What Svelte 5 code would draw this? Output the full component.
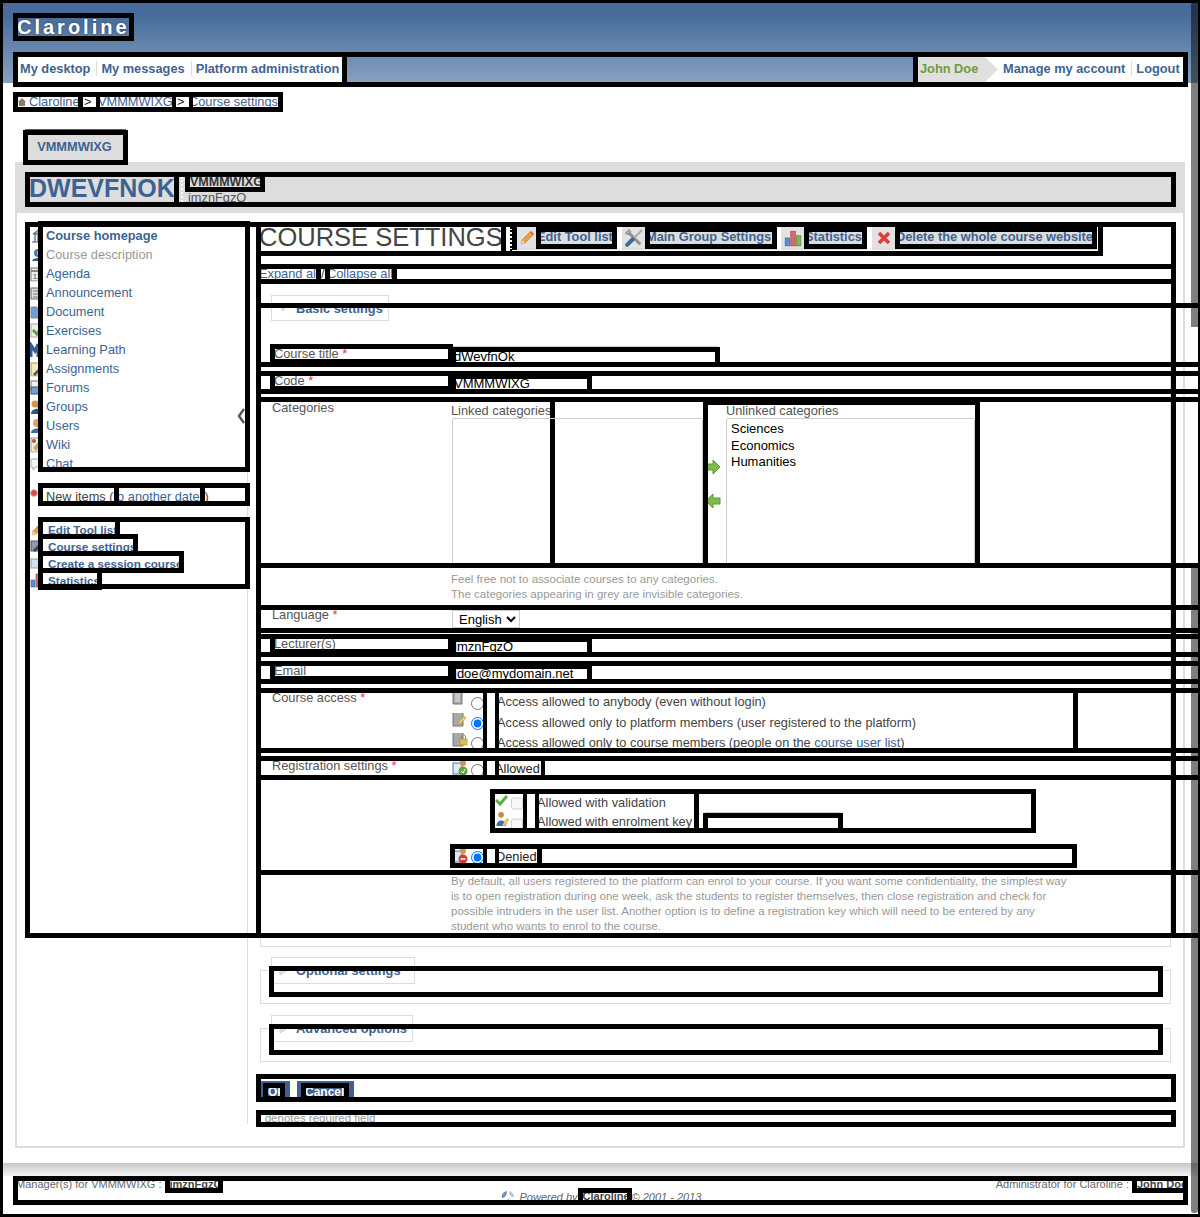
<script>
  const navLeft = ["My desktop", "My messages", "Platform administration"];

  // left menu of the course
  const tools = [
    { name: "Course homepage", icon: "home", bold: true },
    { name: "Course description", icon: "info", off: true },
    { name: "Agenda", icon: "agenda" },
    { name: "Announcement", icon: "announce" },
    { name: "Document", icon: "folder" },
    { name: "Exercises", icon: "check" },
    { name: "Learning Path", icon: "path" },
    { name: "Assignments", icon: "assign" },
    { name: "Forums", icon: "forum" },
    { name: "Groups", icon: "group" },
    { name: "Users", icon: "user" },
    { name: "Wiki", icon: "wiki" },
    { name: "Chat", icon: "chat" },
  ];
  const admin = [
    { name: "Edit Tool list", icon: "pencil", w: 72 },
    { name: "Course settings", icon: "settings", w: 90 },
    { name: "Create a session course", icon: "session", w: 136 },
    { name: "Statistics", icon: "stats", w: 54 },
  ];
  const toolbar = [
    { name: "Edit Tool list", icon: "pencil", cls: "t1" },
    { name: "Main Group Settings", icon: "tools", cls: "t2" },
    { name: "Statistics", icon: "stats", cls: "t3" },
    { name: "Delete the whole course website", icon: "cross", cls: "t4" },
  ];
  const access = [
    { icon: "page", checked: false, label: "Access allowed to anybody (even without login)" },
    { icon: "pagekey", checked: true, label: "Access allowed only to platform members (user registered to the platform)" },
    { icon: "pagelock", checked: false, label: "Access allowed only to course members (people on the ", link: "course user list", after: ")" },
  ];
</script>

{#snippet icon(name)}
  <svg class="ico" viewBox="0 0 16 16" aria-hidden="true">
    {#if name === "home"}
      <path d="M2 14h12M3 6h10L8 2z" fill="#9aa7b5" stroke="#556" />
      <path d="M5 6v8M8 6v8M11 6v8" stroke="#5d7fa8" stroke-width="1.5" />
    {:else if name === "info"}
      <circle cx="8" cy="6" r="4" fill="#4a78ad" />
      <path d="M2 14c1-4 11-4 12 0z" fill="#2f5f98" />
      <path d="M8 4v4" stroke="#fff" />
    {:else if name === "agenda"}
      <rect x="1" y="2" width="14" height="13" fill="#eee" stroke="#777" />
      <path d="M1 5h14" stroke="#888" stroke-width="2" />
      <text x="3" y="13" font-size="7" font-family="Liberation Sans" fill="#444">12</text>
    {:else if name === "announce"}
      <rect x="1" y="3" width="13" height="11" fill="#ddd" stroke="#666" />
      <path d="M3 6h7M3 9h7M3 12h7" stroke="#777" />
      <path d="M13 2l2 2" stroke="#c33" stroke-width="2" />
    {:else if name === "folder"}
      <path d="M1 3h6l1 2h7v9H1z" fill="#6f9ed6" stroke="#8a8a8a" />
    {:else if name === "check"}
      <rect x="1" y="1" width="13" height="13" fill="#eee" stroke="#aaa" />
      <path d="M3 7l4 4 7-9" fill="none" stroke="#58a83a" stroke-width="3" />
    {:else if name === "path"}
      <path d="M1 15V3l4 6 3-7v13" fill="none" stroke="#2f5f98" stroke-width="3" />
    {:else if name === "assign"}
      <rect x="1" y="2" width="13" height="13" fill="#f4e9c5" stroke="#b59b54" />
      <path d="M3 13l8-8 2 2-8 8z" fill="#6b5a35" />
    {:else if name === "forum"}
      <rect x="1" y="1" width="11" height="9" fill="#eee" stroke="#777" />
      <rect x="1" y="7" width="11" height="7" fill="#6f9ed6" stroke="#456" />
    {:else if name === "group"}
      <circle cx="5" cy="5" r="3.5" fill="#d09a4c" />
      <circle cx="10" cy="6" r="3.5" fill="#c98a3c" />
      <path d="M1 15c0-7 13-7 13 0z" fill="#2f5590" />
    {:else if name === "user"}
      <circle cx="7" cy="5" r="4" fill="#e0a552" />
      <path d="M1 15c0-6 12-6 12 0z" fill="#3a6aa5" />
    {:else if name === "wiki"}
      <rect x="1" y="1" width="13" height="14" fill="#eee" stroke="#999" />
      <path d="M3 11l6-7 3 3-6 7z" fill="#d9a441" />
      <circle cx="4" cy="4" r="2" fill="#c0553a" />
    {:else if name === "chat"}
      <path d="M1 3h13v8H6l-3 3v-3H1z" fill="#f2f2f2" stroke="#aaa" />
    {:else if name === "dot"}
      <circle cx="4" cy="6" r="3.5" fill="#e0484d" stroke="#c9c9c9" />
    {:else if name === "pencil"}
      <path d="M2 14l1-4 8-8 3 3-8 8z" fill="#eba13c" stroke="#b4752a" stroke-width=".6" />
      <path d="M2 14l1-4 3 3z" fill="#f3d9b0" />
      <path d="M11 2l3 3 1-1-3-3z" fill="#d9534f" />
    {:else if name === "settings"}
      <rect x="1" y="3" width="9" height="10" fill="#8f9bb0" stroke="#556" />
      <path d="M3 12l7-7 2 2-7 7z" fill="#445" />
    {:else if name === "session"}
      <rect x="1" y="4" width="14" height="9" fill="#d5deef" stroke="#8c9cc0" />
    {:else if name === "stats"}
      <rect x="1" y="8" width="4" height="7" fill="#5b8ed6" stroke="#3a66a8" stroke-width=".6" />
      <rect x="6" y="2" width="4" height="13" fill="#d66a6a" stroke="#a84040" stroke-width=".6" />
      <rect x="11" y="6" width="4" height="9" fill="#7dbb5a" stroke="#4f8a36" stroke-width=".6" />
    {:else if name === "tools"}
      <path d="M3.500 3.500l9.500 9.500" stroke="#8f8f8f" stroke-width="2.400" />
      <path d="M1 4l3-3 1.500 1.500-1 2-2 1z" fill="#a6a6a6" stroke="#7d7d7d" stroke-width=".5" />
      <path d="M14.500 1.500L7 9" stroke="#a9a9a9" stroke-width="1.500" />
      <path d="M7 9l-4.500 4.500" stroke="#3f6a9c" stroke-width="3.200" stroke-linecap="round" />
    {:else if name === "cross"}
      <path d="M3 3l10 10M13 3L3 13" stroke="#dd3f3a" stroke-width="3.600" />
    {:else if name === "page"}
      <path d="M1 0h9v13H1z" fill="#a9a9a9" stroke="#777" />
      <path d="M3 2h5v9H3z" fill="#c6c6c6" />
    {:else if name === "pagekey"}
      <path d="M1 1h10v14H1z" fill="#a9a9a9" stroke="#777" />
      <path d="M6 12l6-7 2 2-6 6z" fill="#f0cf6a" stroke="#b59534" stroke-width=".6" />
    {:else if name === "pagelock"}
      <path d="M1 1h10v14H1z" fill="#a9a9a9" stroke="#777" />
      <rect x="8" y="8" width="7" height="6" fill="#e5c04f" stroke="#a58623" stroke-width=".6" />
      <path d="M9.500 8V6a2 2 0 0 1 4 0v2" fill="none" stroke="#888" />
    {:else if name === "regok"}
      <rect x="1" y="3" width="9" height="11" fill="#dfe8f3" stroke="#4f7aa8" />
      <circle cx="11" cy="3" r="3" fill="#d9944a" />
      <circle cx="11" cy="11" r="4.500" fill="#5aa83c" />
      <path d="M9 11l2 2 2-4" fill="none" stroke="#fff" />
    {:else if name === "regno"}
      <rect x="1" y="3" width="9" height="11" fill="#dfe8f3" stroke="#4f7aa8" />
      <circle cx="11" cy="3" r="3" fill="#d9944a" />
      <circle cx="11" cy="11" r="4.500" fill="#d83a2e" />
      <path d="M8.500 11h5" stroke="#fff" stroke-width="1.500" />
    {:else if name === "tick"}
      <path d="M1 5l4 4 7-8" fill="none" stroke="#62ad43" stroke-width="3" />
    {:else if name === "keyuser"}
      <circle cx="6" cy="3" r="3" fill="#c98a3c" />
      <path d="M1 15c0-8 10-8 10 0z" fill="#3b6db0" />
      <path d="M7 14l5-7 2 1-4 7z" fill="#f0cf6a" stroke="#a58623" stroke-width=".5" />
    {/if}
  </svg>
{/snippet}

<div class="page">
  <header>
    <div class="logo">Claroline</div>
    <nav>
      <ul class="navleft">
        {#each navLeft as item}
          <li>{item}</li>
        {/each}
      </ul>
      <ul class="navright">
        <li class="who">John Doe</li>
        <li>Manage my account</li>
        <li>Logout</li>
      </ul>
    </nav>
  </header>

  <div class="crumbs">
    <span class="c1"><svg class="homeico" viewBox="0 0 8 8" aria-hidden="true"><path d="M0 4l4-4 4 4-1 0v4H1V4z" fill="#8a7a6a" /></svg>Claroline</span>
    <span class="c2">&gt;</span>
    <span class="c3">VMMMWIXG</span>
    <span class="c2">&gt;</span>
    <span class="c4">Course settings</span>
  </div>

  <div class="tabline"><div class="tab">VMMMWIXG</div></div>

  <section class="panel">
    <div class="panelhead">
      <div class="titlebox">
        <h2>DWEVFNOK</h2>
        <div class="dots"></div>
        <div class="owner">
          <span class="code">VMMMWIXG</span>
          <span class="lect">jmznFgzO</span>
        </div>
      </div>
    </div>

    <div class="columns">
      <aside class="sidebar">
        <ul class="menu">
          {#each tools as tool}
            <li class:bold={tool.bold} class:off={tool.off}>
              {@render icon(tool.icon)}
              <span>{tool.name}</span>
            </li>
          {/each}
        </ul>
        <div class="newitems">
          {@render icon("dot")}
          <span class="ntext">New items (</span><a class="nlink">to another date</a><span class="ntext">)</span>
        </div>
        <ul class="adminlist">
          {#each admin as tool}
            <li>
              {@render icon(tool.icon)}
              <a style="width: {tool.w}px">{tool.name}</a>
            </li>
          {/each}
        </ul>
      </aside>

      <div class="chevron">
        <svg viewBox="0 0 8 16" aria-hidden="true"><path d="M7 1L2 8l5 7" fill="none" stroke="#555" stroke-width="2.500" /></svg>
      </div>

      <main class="content">
        <div class="titlebar">
          <h1>COURSE SETTINGS</h1>
          <div class="sep"></div>
          <div class="toolbar">
            {#each toolbar as item}
              <div class="tool {item.cls}">
                <span class="toolico">{@render icon(item.icon)}</span>
                <a>{item.name}</a>
              </div>
            {/each}
          </div>
        </div>

        <div class="expand">
          <a class="exp">Expand all</a><span class="slash">/</span><a class="col">Collapse all</a>
        </div>

        <div class="legend firstleg" style="width: 118px">
          <svg viewBox="0 0 10 10" aria-hidden="true"><path d="M1 2h8L5 8z" fill="#e4e4e4" stroke="#ccc" /></svg>
          <span>Basic settings</span>
        </div>
        <div class="fs first">
          <div class="row h54">
            <label class="flab low">Course title <em>*</em></label>
            <input class="fin wide low2" value="dWevfnOk" />
          </div>

          <div class="row h13 gap14">
            <label class="flab">Code <em>*</em></label>
            <input class="fin narrow" value="VMMMWIXG" />
          </div>

          <div class="row h161 gap13">
            <div class="lab up1">Categories</div>
            <div class="linked">
              <div class="cathead">Linked categories</div>
              <select multiple class="catlist"></select>
            </div>
            <div class="catwrap">
              <div class="arrows">
                <svg viewBox="0 0 16 16" aria-hidden="true"><path d="M1 5h7V1l7 7-7 7v-4H1z" fill="#7cbb4a" stroke="#5b9a35" /></svg>
                <svg viewBox="0 0 16 16" aria-hidden="true"><path d="M15 5H8V1L1 8l7 7v-4h7z" fill="#7cbb4a" stroke="#5b9a35" /></svg>
              </div>
              <div class="unlinked">
                <div class="cathead">Unlinked categories</div>
                <select multiple class="catlist">
                  <option>Sciences</option>
                  <option>Economics</option>
                  <option>Humanities</option>
                </select>
              </div>
            </div>
          </div>

          <div class="cathint">
            Feel free not to associate courses to any categories.<br />
            The categories appearing in grey are invisible categories.
          </div>

          <div class="row h18">
            <div class="lab">Language <em>*</em></div>
            <select class="lang"><option>English</option></select>
          </div>

          <div class="row h13 gap11">
            <label class="flab">Lecturer(s)</label>
            <input class="fin narrow" value="jmznFgzO" />
          </div>

          <div class="row h13 gap14">
            <label class="flab">Email</label>
            <input class="fin narrow" value="jdoe@mydomain.net" />
          </div>

          <div class="row h55 gap14">
            <div class="lab">Course access <em>*</em></div>
            <div class="options">
              {#each access as opt}
                <div class="opt">
                  <div class="pick">
                    {@render icon(opt.icon)}
                    <input type="radio" name="access" checked={opt.checked} />
                  </div>
                  <div class="spacer"></div>
                  <div class="optext">
                    {opt.label}{#if opt.link}<a>{opt.link}</a>{opt.after}{/if}
                  </div>
                </div>
              {/each}
            </div>
          </div>

          <div class="row h14 gap13">
            <div class="lab">Registration settings <em>*</em></div>
            <div class="opt single">
              <div class="pick">
                {@render icon("regok")}
                <input type="radio" name="reg" />
              </div>
              <div class="spacer"></div>
              <div class="optext short">Allowed</div>
            </div>
          </div>

          <div class="subbox">
            <div class="subrow">
              <div class="subpick">
                {@render icon("tick")}
                <input type="checkbox" disabled />
              </div>
              <div class="spacer"></div>
              <div class="subtext">Allowed with validation</div>
            </div>
            <div class="subrow second">
              <div class="subpick">
                {@render icon("keyuser")}
                <input type="checkbox" disabled />
              </div>
              <div class="spacer"></div>
              <div class="subtext">Allowed with enrolment key</div>
              <input class="keyinput" />
            </div>
          </div>

          <div class="denied">
            <div class="pick">
              {@render icon("regno")}
              <input type="radio" name="reg" checked />
            </div>
            <div class="spacer"></div>
            <div class="optext denytext">Denied</div>
          </div>

          <div class="row h58 gap12">
            <p class="reghint">
              By default, all users registered to the platform can enrol to your course. If you want some confidentiality, the simplest way
              is to open registration during one week, ask the students to register themselves, then close registration and check for
              possible intruders in the user list. Another option is to define a registration key which will need to be entered by any
              student who wants to enrol to the course.
            </p>
          </div>
        </div>

        <div class="legend gap10" style="width: 144px">
          <svg viewBox="0 0 10 10" aria-hidden="true"><path d="M2 1v8l6-4z" fill="#e4e4e4" stroke="#ccc" /></svg>
          <span>Optional settings</span>
        </div>
        <div class="fs closed"><div class="fsinner"></div></div>

        <div class="legend gap11" style="width: 142px">
          <svg viewBox="0 0 10 10" aria-hidden="true"><path d="M2 1v8l6-4z" fill="#e4e4e4" stroke="#ccc" /></svg>
          <span>Advanced options</span>
        </div>
        <div class="fs closed"><div class="fsinner"></div></div>

        <div class="buttons">
          <button class="ok"><span>Ok</span></button>
          <button class="cancel"><span>Cancel</span></button>
        </div>

        <div class="required">* denotes required field</div>
      </main>
    </div>
  </section>

  <div class="footshade"></div>
  <footer>
    <div class="footline">
      <div>Manager(s) for VMMMWIXG : <span class="fbox b1">jmznFgzO</span></div>
      <div>Administrator for Claroline : <span class="fbox b2">John Doe</span></div>
    </div>
    <div class="powered">
      <svg viewBox="0 0 16 16" aria-hidden="true">
        <path d="M7 2c-4 1-6 4-5 7 3 0 5-3 5-7z" fill="#6f8fb8" />
        <path d="M9 2c3 1 5 3 5 6-3 0-5-2-5-6z" fill="#b5c3d6" />
        <path d="M8 10l4 3-5 1z" fill="#555" />
      </svg>
      <span>Powered by</span><a class="plink">Claroline</a><span>© 2001 - 2013</span>
    </div>
  </footer>

  <!-- scrollbar tint over the right edge -->
  <div class="strip top"></div>
  <div class="strip low"></div>
</div>

<style>
  :global(body) {
    margin: 0;
    background: #fff;
  }

  .page {
    position: relative;
    box-sizing: border-box;
    width: 1200px;
    height: 1217px;
    border: 3px solid #000;
    border-right-width: 2px;
    overflow: hidden;
    background: #fff;
    font-family: "Liberation Sans", Arial, sans-serif;
    font-size: 12.800px;
    color: #444;
  }

  a {
    color: #3e6392;
  }

  ul {
    list-style: none;
    margin: 0;
    padding: 0;
  }

  em {
    color: #e33;
    font-style: normal;
  }

  .ico {
    display: block;
    flex: none;
    width: 16px;
    height: 16px;
  }

  /* header */
  header {
    height: 80px;
    padding: 15px 15px 0;
    box-sizing: border-box;
    background: linear-gradient(#476c9b, #476c9b 15%, #88a1c0);
  }

  .logo {
    width: 111px;
    height: 18px;
    outline: 5px solid #000;
    color: #fff;
    font-size: 20px;
    font-weight: bold;
    line-height: 18px;
    letter-spacing: 3px;
    white-space: nowrap;
    text-indent: -1px;
    text-shadow: 0 0 3px #2c4060;
  }

  nav {
    display: flex;
    justify-content: space-between;
    height: 25px;
    margin-top: 21px;
    outline: 5px solid #000;
  }

  nav ul {
    display: flex;
    height: 25px;
    background: #fff;
    outline: 5px solid #000;
    font-weight: bold;
    line-height: 23px;
    color: #3e6392;
  }

  .navleft {
    width: 324px;
    padding-left: 2px;
    box-sizing: border-box;
  }

  .navleft li + li {
    margin-left: 6px;
    padding-left: 5px;
    background: linear-gradient(#ddd, #ddd) left 4px / 1px 15px no-repeat;
  }

  .navright {
    width: 265px;
  }

  .navright .who {
    width: 80px;
    box-sizing: border-box;
    padding-left: 2px;
    color: #6f9b3f;
    background: #e0e0e0;
    clip-path: polygon(0 0, 67px 0, 80px 50%, 67px 100%, 0 100%);
  }

  .navright li:nth-child(2) {
    margin-left: 5px;
  }

  .navright li:nth-child(3) {
    margin-left: 6px;
    padding-left: 5px;
    background: linear-gradient(#ddd, #ddd) left 4px / 1px 15px no-repeat;
  }

  /* breadcrumb */
  .crumbs {
    display: flex;
    width: 260px;
    height: 10px;
    margin: 14px 0 0 15px;
    gap: 4px;
    background: #000;
    outline: 5px solid #000;
    line-height: 10px;
    color: #3e6392;
    white-space: nowrap;
  }

  .crumbs span {
    display: block;
    background: #fff;
    overflow: hidden;
  }

  .crumbs .c1 {
    display: flex;
    width: 60px;
    margin-right: 1px;
  }

  .homeico {
    flex: none;
    width: 8px;
    height: 8px;
    margin: 1px 3px 0 0;
  }

  .crumbs .c2 {
    width: 13px;
    padding-left: 1px;
    box-sizing: border-box;
    color: #222;
  }

  .crumbs .c3 {
    width: 72px;
    text-indent: -2px;
  }

  .crumbs .c4 {
    width: 85px;
    text-indent: -4px;
  }

  /* course tab */
  .tabline {
    width: 95px;
    margin: 22px 0 0 22px;
    padding: 5px 3px 0;
    border-top: 1px solid #3e6392;
  }

  .tab {
    box-sizing: border-box;
    width: 95px;
    height: 25px;
    padding-right: 2px;
    outline: 5px solid #000;
    background: #ddd;
    color: #3e6392;
    font-weight: bold;
    line-height: 24px;
    text-align: center;
  }

  /* main panel */
  .panel {
    box-sizing: border-box;
    width: 1170px;
    margin: 2px 0 0 12px;
    border: solid #ddd;
    border-width: 0 2px 2px;
  }

  .panelhead {
    margin: 0 -2px;
    padding: 15px 0 11px 15px;
    background: #ddd;
  }

  .titlebox {
    display: flex;
    width: 1141px;
    height: 25px;
    outline: 5px solid #000;
  }

  h2 {
    box-sizing: content-box;
    width: 144px;
    height: 25px;
    margin: 0;
    border-right: 5px solid #000;
    color: #3e6392;
    font-size: 25px;
    font-weight: bold;
    line-height: 23px;
    text-indent: -1px;
    white-space: nowrap;
    overflow: hidden;
  }

  .dots {
    width: 2px;
    border-right: 2px dotted #fff;
  }

  .owner {
    display: flex;
    flex-direction: column;
    align-items: flex-start;
    margin-left: 7px;
  }

  .code {
    flex: none;
    width: 70px;
    height: 10px;
    outline: 5px solid #000;
    color: #333;
    font-size: 12.500px;
    font-weight: bold;
    line-height: 10px;
    white-space: nowrap;
    overflow: hidden;
    background: #ddd;
  }

  .lect {
    flex: none;
    margin: 4px 0 0 -2px;
    line-height: 14px;
    color: #555;
  }

  .columns {
    position: relative;
    display: flex;
    margin: 14px 0 0 13px;
    padding-bottom: 22px;
  }

  /* frame around menu + form */
  .columns::after {
    content: "";
    position: absolute;
    top: 0;
    left: 0;
    width: 1141px;
    height: 706px;
    outline: 5px solid #000;
    pointer-events: none;
  }

  .columns::before {
    content: "";
    position: absolute;
    top: 0;
    left: 226px;
    width: 5px;
    height: 706px;
    background: #000;
  }

  /* sidebar */
  .sidebar {
    flex: none;
    box-sizing: border-box;
    width: 218px;
    border-right: 1px solid #ddd;
  }

  .menu {
    width: 202px;
    height: 241px;
    margin-left: 13px;
    outline: 5px solid #000;
  }

  .menu li {
    display: flex;
    align-items: center;
    height: 19px;
    margin-left: -13px;
    color: #3e6392;
  }

  .menu li:first-child {
    margin-top: -1px;
  }

  /* only the left part of the tool icons shows beside the list */
  .menu .ico,
  .adminlist .ico,
  .newitems .ico {
    clip-path: inset(0 8px 0 0);
  }

  .menu .bold {
    font-weight: bold;
  }

  .menu .off {
    color: #999;
  }

  .newitems {
    display: flex;
    width: 202px;
    height: 13px;
    margin: 21px 0 0 13px;
    outline: 5px solid #000;
    line-height: 18px;
    white-space: nowrap;
  }

  .newitems .ico {
    margin: -1px 0 0 -13px;
  }

  .ntext {
    color: #444;
  }

  .nlink {
    display: block;
    flex: none;
    width: 81px;
    height: 13px;
    margin: 0 5px;
    outline: 5px solid #000;
    text-indent: -5px;
    overflow: hidden;
  }

  .adminlist {
    width: 202px;
    height: 62px;
    margin: 21px 0 0 13px;
    outline: 5px solid #000;
  }

  .adminlist li {
    display: flex;
    height: 12px;
    margin-left: -13px;
    margin-bottom: 5px;
  }

  .adminlist .ico {
    margin-top: -1px;
  }

  .adminlist a {
    display: block;
    box-sizing: border-box;
    height: 12px;
    margin-left: -3px;
    padding-left: 5px;
    outline: 5px solid #000;
    background: #fff;
    font-size: 11.700px;
    font-weight: bold;
    line-height: 15px;
    white-space: nowrap;
    overflow: hidden;
  }

  .chevron {
    position: absolute;
    top: 181px;
    left: 207px;
    width: 8px;
    height: 16px;
  }

  .chevron svg {
    display: block;
    width: 8px;
    height: 16px;
  }

  /* form */
  .content {
    flex: none;
    width: 911px;
    margin-left: 12px;
    padding-bottom: 2px;
  }

  .titlebar {
    display: flex;
    width: 837px;
    height: 24px;
    margin-left: 1px;
    outline: 5px solid #000;
  }

  h1 {
    box-sizing: content-box;
    flex: none;
    width: 240px;
    height: 24px;
    margin: 0;
    outline: 5px solid #000;
    color: #444;
    font-size: 25.500px;
    font-weight: normal;
    line-height: 21px;
    white-space: nowrap;
    text-indent: -2px;
    overflow: hidden;
  }

  .sep {
    flex: none;
    width: 4px;
    margin-left: 5px;
    border-right: 2px dotted #000;
  }

  .toolbar {
    display: flex;
    flex: none;
    height: 23px;
    padding-left: 5px;
    background: linear-gradient(#000, #000) left / 5px 100% no-repeat;
  }

  .tool {
    display: flex;
    box-sizing: border-box;
    height: 23px;
    border-bottom: 2px solid #ddd;
    background: #eaeaea;
  }

  .toolico {
    display: flex;
    align-items: center;
    justify-content: center;
    background: #e2e2e2;
  }

  .t2 .ico {
    width: 20px;
    height: 20px;
  }

  .t3 .ico {
    width: 18px;
    height: 18px;
  }

  .tool a {
    display: block;
    height: 12px;
    margin: 5px 5px 0 4px;
    outline: 5px solid #000;
    background: #ddd;
    font-weight: bold;
    line-height: 10px;
    white-space: nowrap;
    text-indent: -4px;
    overflow: hidden;
  }

  .t1 { margin-right: 5px; }
  .t1 .toolico { width: 20px; }
  .t1 a { width: 71px; }
  .t2 { margin-right: 4px; }
  .t2 .toolico { width: 24px; }
  .t2 a { width: 122px; }
  .t3 { margin-right: 5px; }
  .t3 .toolico { width: 24px; }
  .t3 a { width: 53px; }
  .t4 .toolico { width: 23px; }
  .t4 a { width: 192px; margin-left: 5px; }

  .expand {
    display: flex;
    width: 910px;
    height: 10px;
    margin: 18px 0 0 1px;
    outline: 5px solid #000;
    line-height: 10px;
    white-space: nowrap;
  }

  .expand a {
    display: block;
    outline: 5px solid #000;
    overflow: hidden;
  }

  .exp {
    width: 55px;
    text-indent: -2px;
  }

  .slash {
    width: 4px;
    margin-left: 5px;
    overflow: hidden;
    background: #fff;
  }

  .col {
    width: 62px;
    margin-left: 5px;
    text-indent: -3px;
  }

  .legend {
    display: flex;
    align-items: center;
    box-sizing: border-box;
    height: 27px;
    margin: 16px 0 -14px 11px;
    padding-left: 6px;
    border: 1px solid #ddd;
    background: #fff;
    color: #3e6392;
    font-weight: bold;
    white-space: nowrap;
  }

  .legend svg {
    width: 10px;
    height: 10px;
    margin-right: 8px;
  }

  .legend.firstleg {
    height: 26px;
  }

  .legend.gap10 {
    margin-top: 10px;
  }

  .legend.gap11 {
    margin-top: 11px;
  }

  .fs {
    box-sizing: border-box;
    width: 911px;
    border: 1px solid #ddd;
  }

  .fs.first {
    padding: 0 0 13px;
  }

  .fs.closed {
    height: 34px;
  }

  .fsinner {
    width: 884px;
    height: 21px;
    margin-left: 13px;
    outline: 5px solid #000;
  }

  .row {
    display: flex;
    align-items: flex-start;
    width: 960px;
    outline: 5px solid #000;
  }

  .h13 { height: 13px; }
  .h14 { height: 14px; }
  .h18 { height: 18px; }
  .h54 { height: 54px; }
  .h55 { height: 55px; }
  .h58 { height: 58px; }
  .h161 { height: 161px; }
  .gap11 { margin-top: 11px; }
  .gap12 { margin-top: 12px; }
  .gap13 { margin-top: 13px; }
  .gap14 { margin-top: 14px; }

  .flab {
    flex: none;
    width: 173px;
    height: 10px;
    margin-left: 14px;
    outline: 5px solid #000;
    color: #555;
    line-height: 10px;
    white-space: nowrap;
    text-indent: -1px;
    overflow: hidden;
  }

  .fin {
    flex: none;
    box-sizing: border-box;
    height: 10px;
    margin: 3px 0 0 8px;
    padding: 0 0 2px;
    border: 0;
    outline: 5px solid #000;
    box-shadow: 0 -3px 0 3px #ccc;
    color: #000;
    font: 13px "Liberation Sans", Arial, sans-serif;
    line-height: 10px;
    text-indent: -2px;
  }

  .flab.low { margin-top: 41px; }
  .fin.low2 { margin-top: 44px; }
  .fin.wide { width: 259px; }
  .fin.narrow { width: 131px; }

  .lab {
    flex: none;
    box-sizing: border-box;
    width: 190px;
    margin-top: -3px;
    padding-left: 11px;
    color: #555;
    line-height: 15px;
    white-space: nowrap;
  }

  .lab.up1 { margin-top: -2px; }

  .linked {
    flex: none;
    width: 252px;
    height: 161px;
    background: linear-gradient(#000, #000) 99px 0 / 5px 100% no-repeat;
    overflow: hidden;
  }

  .cathead {
    height: 15px;
    color: #555;
    line-height: 16px;
    white-space: nowrap;
    overflow: hidden;
  }

  .linked .cathead {
    width: 99px;
    margin-top: 1px;
  }

  .linked .catlist {
    width: 251px;
    margin-left: 1px;
    background: transparent;
  }

  .catlist {
    display: block;
    box-sizing: border-box;
    width: 249px;
    height: 160px;
    margin: 0;
    padding: 2px;
    border: 1px solid #ccc;
    background: #fff;
    font: 13px "Liberation Sans", Arial, sans-serif;
    color: #000;
    overflow: hidden;
  }

  .catlist option {
    min-height: 15px;
    padding: 0 2px 1.500px;
  }

  .catwrap {
    display: flex;
    flex: none;
    width: 267px;
    height: 158px;
    margin: 3px 0 0 5px;
    outline: 5px solid #000;
  }

  .arrows {
    flex: none;
    width: 18px;
    padding-top: 54px;
  }

  .arrows svg {
    display: block;
    width: 16px;
    height: 16px;
    margin: 0 0 18px -3px;
    clip-path: inset(0 0 0 3px);
  }

  .unlinked {
    width: 249px;
    height: 158px;
    overflow: hidden;
  }

  .unlinked .cathead {
    margin-top: -2px;
  }

  .cathint {
    box-sizing: border-box;
    height: 47px;
    padding: 9px 0 0 190px;
    color: #999;
    font-size: 11.520px;
    line-height: 15px;
  }

  .lang {
    box-sizing: border-box;
    width: 68px;
    height: 18px;
    margin: 0 0 0 1px;
    padding: 0 0 0 2px;
    border: 1px solid #ccc;
    border-radius: 0;
    background: #fff;
    color: #000;
    font: 13px "Liberation Sans", Arial, sans-serif;
  }

  .options {
    flex: none;
  }

  .opt {
    display: flex;
    height: 20px;
    margin-left: 1px;
  }

  .opt + .opt .optext {
    padding-top: 1px;
  }

  .opt.single {
    height: 14px;
    width: 700px;
  }

  .pick {
    display: flex;
    flex: none;
    box-sizing: border-box;
    width: 35px;
    border-right: 4px solid #000;
    overflow: hidden;
  }

  .pick .ico {
    margin-top: -2px;
  }

  .pick input {
    flex: none;
    width: 13px;
    height: 13px;
    margin: 4px 0 0 3px;
  }

  .single .pick .ico { margin-top: -1px; }
  .single .pick input { margin-top: 3px; }

  .spacer {
    flex: none;
    box-sizing: border-box;
    width: 12px;
    border-right: 4px solid #000;
  }

  .optext {
    box-sizing: border-box;
    width: 579px;
    border-right: 5px solid #000;
    color: #444;
    line-height: 18px;
    text-indent: -2px;
    white-space: nowrap;
    overflow: hidden;
  }

  .optext a {
    color: #3e6392;
  }

  .optext.short {
    width: 46px;
    border-right-width: 4px;
    line-height: 16px;
    text-indent: -4px;
    color: #222;
  }

  .subbox {
    box-sizing: border-box;
    width: 536px;
    height: 34px;
    margin: 19px 0 0 234px;
    outline: 5px solid #000;
  }

  .subrow {
    display: flex;
    height: 20px;
  }

  .subrow.second {
    height: 19px;
  }

  .subpick {
    display: flex;
    flex: none;
    box-sizing: border-box;
    width: 32px;
    border-right: 4px solid #000;
  }

  .subpick .ico {
    margin-top: 1px;
  }

  .second .subpick .ico {
    margin-top: -2px;
    height: 15px;
  }

  .subpick input {
    flex: none;
    width: 12px;
    height: 13px;
    margin: 3px 0 0 0;
  }

  .second .subpick input {
    margin-top: 4px;
  }

  .subtext {
    flex: none;
    box-sizing: border-box;
    width: 160px;
    border-right: 5px solid #000;
    color: #444;
    line-height: 18px;
    text-indent: -2px;
    white-space: nowrap;
    overflow: hidden;
  }

  .second .subtext {
    line-height: 16px;
  }

  .keyinput {
    box-sizing: border-box;
    flex: none;
    width: 130px;
    height: 10px;
    margin: 4px 0 0 9px;
    padding: 0;
    border: 0;
    outline: 5px solid #000;
    box-shadow: 0 -3px 0 3px #ccc;
  }

  .denied {
    display: flex;
    box-sizing: border-box;
    width: 617px;
    height: 14px;
    margin: 21px 0 0 194px;
    outline: 5px solid #000;
  }

  .denied .pick {
    width: 32px;
  }

  .denied .ico {
    margin: -1px 0 0 -3px;
    clip-path: inset(1px 0 1px 3px);
  }

  .denied .pick input {
    margin: 2px 0 0 3px;
  }

  .denytext {
    width: 43px;
    line-height: 16px;
    text-indent: -3px;
    color: #222;
  }

  .reghint {
    box-sizing: border-box;
    width: 620px;
    margin: -1px 0 0 190px;
    color: #999;
    font-size: 11.520px;
    line-height: 15px;
  }

  .buttons {
    display: flex;
    width: 910px;
    height: 18px;
    margin: 17px 0 0 1px;
    outline: 5px solid #000;
    gap: 7px;
  }

  .buttons button {
    display: block;
    box-sizing: border-box;
    height: 16px;
    margin: 2px 0 0;
    padding: 5px 0 0 7px;
    border: 0;
    background: #3e6392;
    color: #fff;
    font: bold 12px "Liberation Sans", Arial, sans-serif;
    text-align: left;
  }

  .buttons span {
    display: block;
    height: 8px;
    outline: 5px solid #000;
    line-height: 8px;
    overflow: hidden;
    white-space: nowrap;
  }

  .ok { width: 29px; }
  .ok span { width: 12px; }
  .buttons .cancel { width: 57px; padding-left: 9px; }
  .cancel span { width: 38px; text-indent: -1px; }

  .required {
    width: 910px;
    height: 7px;
    margin: 18px 0 0 1px;
    outline: 5px solid #000;
    color: #999;
    font-size: 11.520px;
    line-height: 7px;
    text-indent: -4px;
    white-space: nowrap;
  }

  /* footer */
  .footshade {
    height: 13px;
    margin-top: 15px;
    background: linear-gradient(#c8c8c8, #f4f4f4);
  }

  footer {
    display: flow-root;
    box-sizing: border-box;
    width: 1165px;
    height: 19px;
    margin: 5px 0 0 15px;
    outline: 5px solid #000;
    color: #666;
    font-size: 11px;
  }

  .footline {
    display: flex;
    justify-content: space-between;
    height: 12px;
    margin-top: -3px;
    line-height: 12px;
    white-space: nowrap;
    text-indent: -2px;
  }

  .fbox {
    display: inline-block;
    height: 7px;
    margin: 3px 0 0 5px;
    outline: 5px solid #000;
    line-height: 7px;
    vertical-align: top;
    overflow: hidden;
    text-indent: 0;
    color: #444;
    font-weight: bold;
  }

  .b1 { width: 48px; }
  .b2 { width: 46px; }

  .powered {
    display: flex;
    align-items: center;
    justify-content: center;
    height: 13px;
    font-style: italic;
    white-space: nowrap;
  }

  .powered svg {
    width: 16px;
    height: 16px;
    margin-right: 4px;
  }

  .plink {
    display: block;
    align-self: flex-start;
    width: 44px;
    height: 7px;
    margin: 3px 5px 0;
    outline: 5px solid #000;
    color: #444;
    font-style: normal;
    font-weight: bold;
    line-height: 7px;
    overflow: hidden;
  }

  .strip {
    position: absolute;
    right: 0;
    width: 7px;
    background: rgba(0, 0, 0, 0.5);
  }

  .strip.top {
    top: 0;
    height: 324px;
  }

  .strip.low {
    top: 565px;
    height: 645px;
    border-radius: 0 0 3px 3px;
  }
</style>
